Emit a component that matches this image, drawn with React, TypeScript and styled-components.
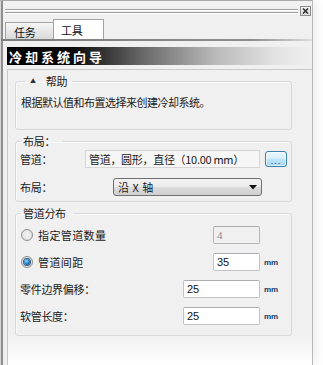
import React from "react";
import styled, { createGlobalStyle, css } from "styled-components";

const GlobalStyle = createGlobalStyle`
  html, body {
    margin: 0;
    padding: 0;
    background: #ffffff;
  }
  body {
    font-family: "Noto Sans CJK SC", "Liberation Sans", sans-serif;
    font-size: 11px;
    color: #1a1a1a;
  }
`;

const Frame = styled.div`
  width: 311px;
  height: 364px;
  display: flex;
  flex-direction: column;
  background: #f0f0f0;
  border-top: 1px solid #a9a9a9;
  border-left: 1px solid #d6d6d6;
  box-shadow: inset 2px 0 0 #8e8e8e, 1px 0 0 #b9b9b9, 5px 0 9px rgba(0, 0, 0, 0.07);
`;

const GripRow = styled.div`
  height: 19px;
  display: flex;
  align-items: center;
  padding-left: 4px;
`;

const Grip = styled.div`
  flex: 1;
  height: 2px;
  border-top: 1px solid #9d9d9d;
  border-bottom: 1px solid #9d9d9d;
  box-shadow: 0 1px 0 #ffffff, inset 0 1px 0 #ffffff;
  margin-right: 2px;
`;

const CloseBox = styled.div`
  width: 9px;
  height: 8px;
  border: 1px solid #8b8b8b;
  background: linear-gradient(#f4f4f4, #dcdcdc);
  display: flex;
  align-items: center;
  justify-content: center;
  margin-right: 1px;
`;

const TabStrip = styled.div`
  height: 19px;
  display: flex;
  align-items: flex-end;
  padding-left: 4px;
  border-bottom: 2px solid;
  border-image: linear-gradient(to right, #7d7d7d, #8c8c8c 80%, #dedede) 1;
`;

const Tab = styled.div<{ $active?: boolean }>`
  box-sizing: border-box;
  display: flex;
  align-items: center;
  border: 1px solid #a3a3a3;
  border-bottom: none;
  letter-spacing: -0.3px;
  color: #111;
  ${(p) =>
    p.$active
      ? css`
          width: 51px;
          height: 20px;
          padding-left: 7px;
          background: #ffffff;
          margin-left: -1px;
        `
      : css`
          width: 49px;
          height: 17px;
          padding-left: 8px;
          padding-top: 2px;
          background: linear-gradient(#f6f6f6, #d9d9d9);
        `}
`;

const TitleBar = styled.div`
  margin: 6px 0 0 6px;
  height: 18px;
  display: flex;
  align-items: center;
  padding-left: 2px;
  background: linear-gradient(
    to right,
    #000000 0%,
    #0c0c0c 22%,
    #6a6a6a 45%,
    #b9b9b9 68%,
    #e2e2e2 88%,
    #f0f0f0 100%
  );
  color: #ffffff;
  font-weight: bold;
  font-size: 13px;
  letter-spacing: 3px;
`;

const Panel = styled.div`
  flex: 1;
  margin: 4px 0 0 6px;
  border-top: 1px solid #c9c9c9;
  border-left: 1px solid #c9c9c9;
  padding: 4px 20px 0 7px;
  display: flex;
  flex-direction: column;
  gap: 4px;
  background: linear-gradient(to bottom, #f0f0f0 0, #f0f0f0 calc(100% - 30px), #ffffff 100%);
`;

const Group = styled.fieldset<{ $gap?: number }>`
  margin: 0;
  min-width: 0;
  border: 1px solid #d5d9dc;
  border-radius: 3px;
  box-shadow: inset 1px 1px 0 #fafafa;
  padding: 2px 4px 5px 4px;
  display: flex;
  flex-direction: column;
  gap: ${(p) => p.$gap ?? 9}px;
`;

const Legend = styled.legend<{ $wide?: boolean }>`
  line-height: 14px;
  padding: ${(p) => (p.$wide ? "0 5px 0 4px" : "0 7px 0 2px")};
  margin-left: ${(p) => (p.$wide ? 6 : 1)}px;
  letter-spacing: -0.3px;
  display: flex;
  align-items: center;
`;

const Caret = styled.span`
  font-size: 6px;
  margin-right: 10px;
  color: #333;
`;

const HelpText = styled.div`
  padding: 4px 0 14px 1px;
  line-height: 16px;
  letter-spacing: -0.5px;
  color: #222;
`;

const Row = styled.div`
  height: 18px;
  display: flex;
  align-items: center;
`;

const Label = styled.span<{ $width?: number }>`
  ${(p) => (p.$width ? `width: ${p.$width}px;` : "flex: 1;")}
  letter-spacing: -0.3px;
  white-space: nowrap;
  color: #1a1a1a;
`;

const ReadField = styled.div`
  box-sizing: border-box;
  width: 175px;
  height: 18px;
  border: 1px solid #d6d6d6;
  background: #f6f6f6;
  padding-left: 3px;
  display: flex;
  align-items: center;
  letter-spacing: -0.3px;
  white-space: nowrap;
`;

const BrowseButton = styled.div`
  box-sizing: border-box;
  width: 22px;
  height: 16px;
  margin-left: 5px;
  border: 1px solid #3c7fb1;
  border-radius: 3px;
  background: linear-gradient(#eaf6fd 0%, #d9f0fc 45%, #bee6fd 50%, #a7d9f5 100%);
  box-shadow: inset 0 0 0 1px rgba(255, 255, 255, 0.6);
  display: flex;
  align-items: flex-end;
  justify-content: center;
  font-family: "Liberation Sans", sans-serif;
  font-size: 9px;
  line-height: 10px;
  color: #203040;
  letter-spacing: 1px;
`;

const Select = styled.div`
  box-sizing: border-box;
  width: 149px;
  height: 18px;
  border: 1px solid #707070;
  border-radius: 3px;
  background: linear-gradient(#f2f2f2 0%, #ebebeb 50%, #dddddd 50%, #cfcfcf 100%);
  display: flex;
  align-items: center;
  justify-content: space-between;
  padding: 0 4px 0 4px;
  letter-spacing: 0.5px;
`;

const TextInput = styled.div<{ $width: number; $disabled?: boolean }>`
  box-sizing: border-box;
  width: ${(p) => p.$width}px;
  height: 18px;
  border: 1px solid ${(p) => (p.$disabled ? "#b5b5b5" : "#c3c3c3")};
  border-top-color: ${(p) => (p.$disabled ? "#adadad" : "#abadb3")};
  border-radius: 2px;
  background: ${(p) => (p.$disabled ? "#f0f0f0" : "#ffffff")};
  color: ${(p) => (p.$disabled ? "#8a8a8a" : "#111")};
  font-family: ${(p) =>
    p.$disabled ? '"Liberation Serif", serif' : '"Liberation Sans", sans-serif'};
  font-size: 11px;
  display: flex;
  align-items: center;
  padding-left: 3px;
`;

const Unit = styled.span`
  width: 27px;
  padding-left: 4px;
  box-sizing: border-box;
  font-family: "Liberation Sans", sans-serif;
  font-size: 8px;
  font-weight: bold;
  color: #1d3b66;
`;

const RadioLabel = styled.label`
  flex: 1;
  display: flex;
  align-items: center;
  gap: 5px;
  padding-left: 1px;
  letter-spacing: 0.4px;
`;

const RadioDot = styled.span<{ $checked?: boolean }>`
  box-sizing: border-box;
  width: 12px;
  height: 12px;
  border-radius: 50%;
  border: 1px solid #8c8e8f;
  background: radial-gradient(circle at 50% 50%, #f4f4f4 0%, #dcdcdc 100%);
  display: flex;
  align-items: center;
  justify-content: center;

  &::after {
    content: "";
    display: ${(p) => (p.$checked ? "block" : "none")};
    width: 6px;
    height: 6px;
    border-radius: 50%;
    background: radial-gradient(circle at 40% 35%, #8ad6ff 0%, #1d79c2 55%, #0b3f73 100%);
    box-shadow: 0 0 0 1px #3b5f80;
  }
`;

const Radio = ({ checked, children }: { checked?: boolean; children: React.ReactNode }) => (
  <RadioLabel>
    <RadioDot $checked={checked} />
    {children}
  </RadioLabel>
);

const App = () => {
  return (
    <>
      <GlobalStyle />
      <Frame>
        <GripRow>
          <Grip />
          <CloseBox>
            <svg width="7" height="6" viewBox="0 0 7 6">
              <path d="M1 0.5 L6 5.5 M6 0.5 L1 5.5" stroke="#333" strokeWidth="1.6" />
            </svg>
          </CloseBox>
        </GripRow>

        <TabStrip>
          <Tab>任务</Tab>
          <Tab $active>工具</Tab>
        </TabStrip>

        <TitleBar>冷却系统向导</TitleBar>

        <Panel>
          <Group>
            <Legend $wide>
              <Caret>▲</Caret>帮助
            </Legend>
            <HelpText>根据默认值和布置选择来创建冷却系统。</HelpText>
          </Group>

          <Group $gap={10}>
            <Legend>布局：</Legend>
            <Row>
              <Label $width={65}>管道：</Label>
              <ReadField>管道，圆形，直径（10.00 mm）</ReadField>
              <BrowseButton>...</BrowseButton>
            </Row>
            <Row>
              <Label $width={93}>布局：</Label>
              <Select>
                <span>沿 X 轴</span>
                <svg width="8" height="5" viewBox="0 0 8 5">
                  <path d="M0 0 H8 L4 4.5 Z" fill="#111" />
                </svg>
              </Select>
            </Row>
          </Group>

          <Group style={{ paddingTop: 6, paddingBottom: 10 }}>
            <Legend>管道分布</Legend>
            <Row>
              <Radio>指定管道数量</Radio>
              <TextInput $width={47} $disabled>
                4
              </TextInput>
              <Unit />
            </Row>
            <Row>
              <Radio checked>管道间距</Radio>
              <TextInput $width={47}>35</TextInput>
              <Unit>mm</Unit>
            </Row>
            <Row>
              <Label>零件边界偏移：</Label>
              <TextInput $width={77}>25</TextInput>
              <Unit>mm</Unit>
            </Row>
            <Row>
              <Label>软管长度：</Label>
              <TextInput $width={77}>25</TextInput>
              <Unit>mm</Unit>
            </Row>
          </Group>
        </Panel>
      </Frame>
    </>
  );
};

export default App;
